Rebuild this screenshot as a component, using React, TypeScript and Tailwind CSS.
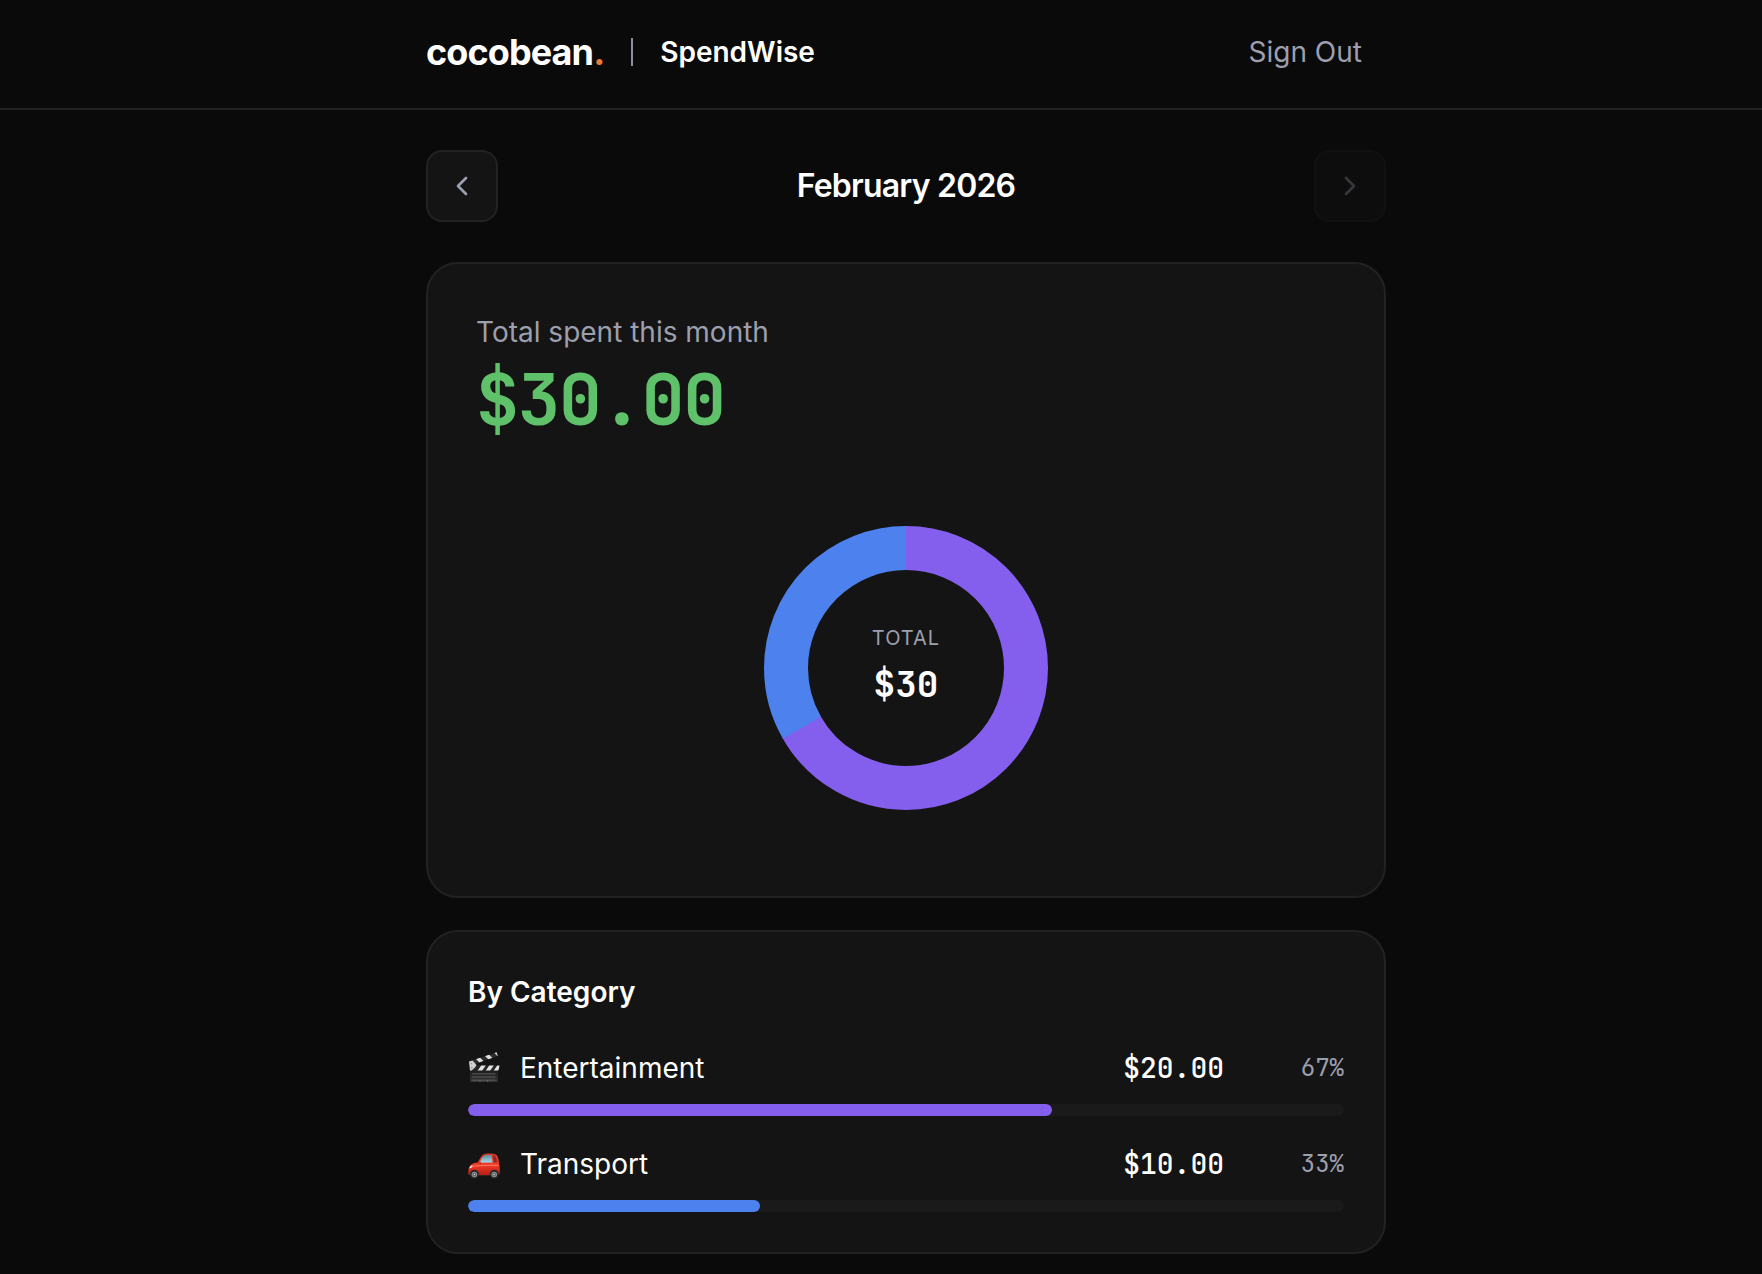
import React from 'react';
import { ChevronLeft, ChevronRight } from 'lucide-react';

interface Category {
  name: string;
  amount: number;
  color: string;
  barClass: string;
  icon: React.ReactNode;
}

const ClapperIcon = () => (
  <svg className="h-8 w-8" viewBox="0 0 32 32" aria-hidden="true">
    <defs>
      <linearGradient id="slate" x1="0" y1="0" x2="0" y2="1">
        <stop offset="0" stopColor="#1b1b1b" />
        <stop offset="1" stopColor="#363636" />
      </linearGradient>
      <clipPath id="stick">
        <path d="M1 9.600 28.600.3l1.200 3.800L2.400 13.400z" />
      </clipPath>
      <clipPath id="board">
        <path d="M2 13.600h29.500l-1 5H2z" />
      </clipPath>
    </defs>
    <g clipPath="url(#stick)">
      <path d="M0 0h32v16H0z" fill="#2c2c2c" />
      <path d="M7 6l5.500 5.500 4-1.400L11 4.500zM16 3l5.500 5.500 4-1.400L20 1.500zM25-.4l5.500 5.500 3-1L29-2z" fill="#dedede" />
    </g>
    <path d="M2 18h28v11.200q0 .8-.8.8H2.800Q2 30 2 29.200z" fill="url(#slate)" />
    <g clipPath="url(#board)">
      <path d="M2 13h30v6H2z" fill="#262626" />
      <path d="M13.500 13h4.500l-4 6H9.500zM21.500 13H26l-4 6h-4.500zM29.500 13H34l-4 6h-4.500z" fill="#e2e2e2" />
    </g>
    <path d="M1 9.600 4.500 8.500l4 4.500L7 15.500 3.600 18.600H2z" fill="#cfcfcf" />
    <circle cx="3.400" cy="11.600" r=".7" fill="#8a8a8a" />
    <circle cx="3.800" cy="15.800" r=".7" fill="#8a8a8a" />
    <path d="M4 21.800h23.500M4 25h23.500M4 28.200h23.500M12 28.200V30M19.500 28.200V30" stroke="#747074" strokeWidth=".7" />
  </svg>
);

const CarIcon = () => (
  <svg className="h-8 w-8" viewBox="0 0 32 32" aria-hidden="true">
    <defs>
      <linearGradient id="paint" x1="0" y1="0" x2="0" y2="1">
        <stop offset="0" stopColor="#d8392b" />
        <stop offset=".55" stopColor="#f03a28" />
        <stop offset="1" stopColor="#b51d14" />
      </linearGradient>
      <linearGradient id="glass" x1="0" y1="0" x2="0" y2="1">
        <stop offset="0" stopColor="#5d8f9e" />
        <stop offset="1" stopColor="#a5dbea" />
      </linearGradient>
    </defs>
    <path d="M2 24h28l-1 4H3z" fill="#33201f" />
    <path
      d="M.4 25.500c-.3-3 .1-6.300 2-8.200 1.800-1.700 4.600-2.300 7.400-2.700 1.200-2.800 3.200-6.600 5.200-7.900C17 5.400 24.500 5.100 27.800 6.600c2 .9 3 4.800 3.200 9.200.8 2 1.100 7 .6 9.400-.2 1-1 1.800-2 1.800H2.300C1 27 .5 26.500.4 25.500z"
      fill="url(#paint)"
    />
    <path d="M11.800 14.800c1-2.900 2.700-6.100 4.200-7 1.600-.8 5.200-.9 7.500-.7l1 7.400z" fill="url(#glass)" />
    <path d="M24.900 7.300c1.300.1 2.100.4 2.600 1.200.8 1.400 1.200 3.700 1.300 5.700l-3 .2z" fill="#8b2a25" />
    <path d="M3 19c6-1.900 18-1.800 27.600-1.600" stroke="#ff8d77" strokeWidth=".8" fill="none" />
    <path d="M1.500 20.500c.4-1.900 1.300-2.900 3-3.300.2 1.500-1.200 3-3 3.300z" fill="#fff2e6" />
    <ellipse cx="12.200" cy="15.300" rx="1.400" ry="1.500" fill="#e13426" />
    {[6.4, 26.2].map((cx) => (
      <g key={cx}>
        <circle cx={cx} cy="26.200" r="4.500" fill="#2b292b" />
        <circle cx={cx} cy="26.500" r="2.800" fill="#8f8f93" />
        <circle cx={cx} cy="26.500" r="1.700" fill="#5c5c60" />
        <circle cx={cx} cy="26.500" r=".8" fill="#d5d5d5" />
      </g>
    ))}
  </svg>
);

const categories: Category[] = [
  { name: 'Entertainment', amount: 20, color: '#845eec', barClass: 'bg-[#845eec]', icon: <ClapperIcon /> },
  { name: 'Transport', amount: 10, color: '#4d81ed', barClass: 'bg-[#4d81ed]', icon: <CarIcon /> },
];

const total = categories.reduce((sum, c) => sum + c.amount, 0);

const RADIUS = 120;
const CIRCUMFERENCE = 2 * Math.PI * RADIUS;

const DonutChart = () => {
  let offset = 0;

  return (
    <div className="relative">
      <svg className="h-71 w-71 -rotate-90" viewBox="0 0 284 284" role="img" aria-label="Spending by category">
        {categories.map((c, i) => {
          const length = (c.amount / total) * CIRCUMFERENCE;
          const start = offset;
          offset += length;
          // run slightly under the next segment so no seam shows
          const drawn = i < categories.length - 1 ? length + 1 : length;
          return (
            <circle
              key={c.name}
              cx="142"
              cy="142"
              r={RADIUS}
              fill="none"
              stroke={c.color}
              strokeWidth="44"
              strokeDasharray={`${drawn} ${CIRCUMFERENCE - drawn}`}
              strokeDashoffset={-start}
            />
          );
        })}
      </svg>
      <div className="absolute inset-0 flex flex-col items-center justify-center gap-3 pb-2">
        <span className="text-xl tracking-wider text-[#9c9fae]">TOTAL</span>
        <span className="font-['JetBrains_Mono','DejaVu_Sans_Mono',monospace] text-4xl font-semibold">${total}</span>
      </div>
    </div>
  );
};

const CategoryRow: React.FC<{ category: Category }> = ({ category }) => {
  const share = (category.amount / total) * 100;

  return (
    <li className="flex flex-col gap-4">
      <div className="flex h-10 items-center">
        {category.icon}
        <span className="ml-5 flex-1 text-[28px]">{category.name}</span>
        <span className="font-['JetBrains_Mono','DejaVu_Sans_Mono',monospace] text-[28px] font-medium">
          ${category.amount.toFixed(2)}
        </span>
        <span className="ml-6 w-24 text-right font-['JetBrains_Mono','DejaVu_Sans_Mono',monospace] text-2xl text-[#9c9fae]">
          {Math.round(share)}%
        </span>
      </div>
      <div className="h-3 overflow-hidden rounded-full bg-[#1a1a1a]">
        <div className={`h-full rounded-full ${category.barClass}`} style={{ width: `${share}%` }} />
      </div>
    </li>
  );
};

const App: React.FC = () => {
  return (
    <div className="min-h-screen bg-[#0a0a0a] font-['Inter',sans-serif] text-white">
      <header className="border-b-2 border-[#222222] pl-[50px]">
        <div className="mx-auto flex h-27 max-w-[960px] items-center justify-between pb-1">
          <div className="flex items-center gap-[27px]">
            <a href="#" className="text-4xl font-bold tracking-tight">
              cocobean<span className="text-[#e87b35]">.</span>
            </a>
            <span className="h-7 w-0.5 bg-[#8b8e9c]" />
            <span className="text-[28px] font-semibold">SpendWise</span>
          </div>
          <button className="px-6 text-[28px] text-[#9c9fae]">Sign Out</button>
        </div>
      </header>

      <main className="pt-10 pb-5 pl-[50px]">
        <div className="mx-auto max-w-[960px]">
          <div className="mb-10 flex items-center justify-between">
            <button
              aria-label="Previous month"
              className="flex h-18 w-18 items-center justify-center rounded-2xl border-2 border-[#222222] bg-[#141414] text-[#9c9fae]"
            >
              <ChevronLeft className="h-8 w-8" />
            </button>
            <h1 className="text-[32px] font-semibold tracking-tight">February 2026</h1>
            <button
              disabled
              aria-label="Next month"
              className="flex h-18 w-18 items-center justify-center rounded-2xl border-2 border-[#222222] bg-[#141414] text-[#9c9fae] opacity-30"
            >
              <ChevronRight className="h-8 w-8" />
            </button>
          </div>

          {/* Monthly total */}
          <section className="mb-8 rounded-4xl border-2 border-[#222222] bg-[#141414] p-12">
            <p className="text-[28px] leading-10 text-[#9c9fae]">Total spent this month</p>
            <p className="mt-2 font-['JetBrains_Mono','DejaVu_Sans_Mono',monospace] text-7xl leading-20 font-bold tracking-tight text-[#5fc26b]">
              ${total.toFixed(2)}
            </p>
            <div className="mt-12 flex justify-center py-[38px]">
              <DonutChart />
            </div>
          </section>

          {/* Category breakdown */}
          <section className="rounded-4xl border-2 border-[#222222] bg-[#141414] p-10">
            <h2 className="text-[28px] leading-10 font-semibold">By Category</h2>
            <ul className="mt-9 flex flex-col gap-7">
              {categories.map((c) => (
                <CategoryRow key={c.name} category={c} />
              ))}
            </ul>
          </section>
        </div>
      </main>
    </div>
  );
};

export default App;
